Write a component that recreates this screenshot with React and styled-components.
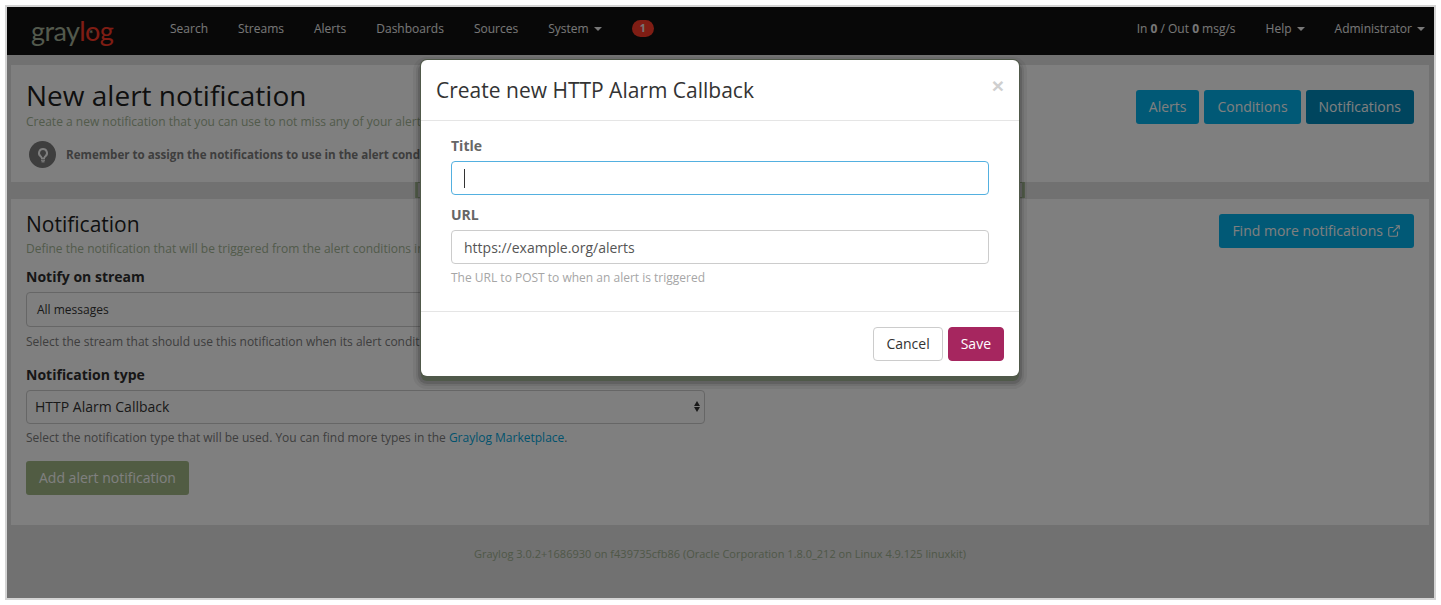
import React from "react";
import styled, { createGlobalStyle } from "styled-components";

const Global = createGlobalStyle`
  html, body { margin: 0; padding: 0; background: #fff; }
  body { font-family: "Open Sans", "Liberation Sans", sans-serif; }
  * { box-sizing: border-box; }
`;
const Frame = styled.div`
  width: 1441px; height: 605px; padding: 5px; background: #fff;
`;
const Window = styled.div`
  position: relative; width: 1431px; height: 595px; border: 2px solid #d4d4d4;
  background: #e2e2e2; overflow: hidden; display: flex; flex-direction: column;
`;
const Nav = styled.nav`
  height: 48px; flex: none; background: #101010; display: flex; align-items: center;
  padding: 0 9px 6px 24px; font-size: 12px; color: #eee;
`;
const Logo = styled.div`
  position: relative; width: 139px; font-family: "Lato", sans-serif; font-size: 27px; line-height: 1;
  color: #a6b29a; letter-spacing: -0.6px; margin-top: 5px;
`;
const LogoRed = styled.span`color: #ff3b28;`;
const LogoStar = styled.span`
  position: absolute; left: 58px; top: 10px; font-size: 10px; line-height: 12px; color: #a6b29a; font-weight: 700;
`;
const NavLinks = styled.div`display: flex; gap: 30px; align-items: center;`;
const NavSpacer = styled.div`flex: 1;`;
const Caret = styled.span`
  display: inline-block; width: 0; height: 0; margin-left: 5px; vertical-align: middle;
  border-top: 4px solid currentColor; border-left: 4px solid transparent; border-right: 4px solid transparent;
`;
const Badge = styled.span`
  display: inline-block; background: #ff3b28; color: #eee; font-weight: 700; font-size: 10.5px;
  border-radius: 10px; padding: 1px 8px; line-height: 15px;
`;
const Main = styled.main`
  flex: 1; padding: 10px 5px 0 4px; display: flex; flex-direction: column;
`;
const Panel = styled.section`
  background: #fff; padding: 15px; display: flex; justify-content: space-between;
  height: ${(p) => p.$h}px; flex: none;
`;
const PanelGap = styled.div`
  height: 17px; flex: none; display: flex; justify-content: center; padding: 0 0 1px;
`;
const GapBox = styled.div`width: 610px; border: 1px solid #a8bc98; border-left-width: 3px; border-right-width: 3px;`;
const H1 = styled.h1`margin: -1px 0 0; font-size: 28px; font-weight: 400; line-height: 32px; color: #1f1f1f;`;
const H2 = styled.h2`margin: -2px 0 0; font-size: 21px; font-weight: 400; line-height: 25px; color: #1f1f1f;`;
const Sub = styled.p`margin: ${(p) => p.$mt || 0}px 0 0; font-size: 12px; line-height: 17px; color: #a4b696; white-space: nowrap;`;
const Hint = styled.div`
  display: flex; align-items: center; gap: 10px; margin-top: 11px; padding-left: 3px; font-weight: 700;
  font-size: 11.6px; color: #7c7c7c; white-space: nowrap;
`;
const Bulb = styled.span`
  width: 27px; height: 27px; border-radius: 50%; background: #7c7c7c; color: #fff;
  display: flex; align-items: center; justify-content: center;
`;
const Buttons = styled.div`display: flex; gap: 5px; margin-top: ${(p) => p.$mt ?? 10}px; align-items: flex-start;`;
const Btn = styled.button`
  font: 400 14px/20px "Open Sans", sans-serif; padding: 6px 13px; height: 34px; border-radius: 3px;
  border: 0; color: #fff; background: ${(p) => p.$bg}; white-space: nowrap; display: inline-flex; align-items: center;
  margin-top: ${(p) => p.$mt || 0}px;
`;
const Label = styled.div`
  font-weight: 700; font-size: 14px; line-height: 18px; color: #2e2e2e; margin-top: ${(p) => p.$mt || 0}px;
`;
const Field = styled.div`
  height: ${(p) => p.$h || 34}px; border: 1px solid #ccc; border-radius: 4px; background: #fff; width: 679px;
  display: flex; align-items: center; justify-content: space-between; margin-top: 6px;
  padding: 0 ${(p) => p.$px || 8}px 1px; font-size: ${(p) => p.$fs || 14}px; color: #333;
`;
const Help = styled.p`margin: ${(p) => p.$mt}px 0 0; font-size: 12px; line-height: 17px; color: #7c7c7c; white-space: nowrap;`;
const Link = styled.span`color: #02a6dc;`;
const Updown = styled.span`display: inline-flex; flex-direction: column; gap: 1px; margin-right: -4px;`;
const Up = styled.i`
  width: 0; height: 0; border-left: 3.5px solid transparent; border-right: 3.5px solid transparent;
  ${(p) => (p.$down ? "border-top: 5px solid #333;" : "border-bottom: 5px solid #333;")}
`;
const Footer = styled.footer`
  flex: 1; text-align: center; font-size: 11px; color: #9fb090; padding-top: 22px; line-height: 14px;
`;
const Overlay = styled.div`
  position: absolute; inset: 0; background: rgba(0, 0, 0, 0.5); display: flex; justify-content: center; align-items: flex-start;
  padding-top: 53px; padding-right: 1px;
`;
const Modal = styled.div`
  width: 598px; height: 316px; background: #fff; border-radius: 6px; display: flex; flex-direction: column;
  box-shadow: 0 0 0 1px #50594a, 0 5px 0 0 #50594a,
    0 5px 0 3px rgba(0, 0, 0, 0.12), 0 5px 0 5px rgba(0, 0, 0, 0.07), 0 5px 0 8px rgba(0, 0, 0, 0.05);
`;
const ModalHead = styled.div`
  height: 61px; border-bottom: 1px solid #e5e5e5; padding: 0 15px; display: flex; justify-content: space-between; flex: none;
`;
const ModalTitle = styled.h3`margin: 15px 0 0; font-size: 21px; line-height: 30px; font-weight: 400; color: #333;`;
const Close = styled.span`margin-top: 12px; font-size: 21px; font-weight: 700; line-height: 28px; color: #cfcfcf; font-family: "Liberation Sans", sans-serif;`;
const ModalBody = styled.div`flex: 1; padding: 16px 30px 0;`;
const MLabel = styled.div`font-weight: 700; font-size: 14px; line-height: 18px; color: #666; margin-top: ${(p) => p.$mt || 0}px;`;
const MInput = styled.div`
  height: 34px; border: 1px solid ${(p) => (p.$focus ? "#53b0e0" : "#ccc")}; border-radius: 4px; margin-top: 6px;
  display: flex; align-items: center; padding: 0 12px; font-size: 14px; color: #555;
`;
const CaretBar = styled.span`width: 1px; height: 19px; background: #333;`;
const MHelp = styled.p`margin: 6px 0 0; font-size: 12px; line-height: 16px; color: #a6a6a6;`;
const ModalFoot = styled.div`
  height: 65px; flex: none; border-top: 1px solid #e5e5e5; padding: 15px; display: flex; justify-content: flex-end; gap: 5px;
`;
const FootBtn = styled.button`
  font: 400 14px/20px "Open Sans", sans-serif; height: 34px; padding: 0 12px; border-radius: 4px;
  border: 1px solid ${(p) => (p.$primary ? "#a6265f" : "#ccc")}; background: ${(p) => (p.$primary ? "#a6265f" : "#fff")};
  color: ${(p) => (p.$primary ? "#fff" : "#333")};
`;
const ExtSvg = styled.svg`margin-left: 4px;`;

const Ext = () => (
  <ExtSvg width="14" height="14" viewBox="0 0 24 24" fill="none" stroke="currentColor" strokeWidth="2">
    <path d="M18 13v6a2 2 0 0 1-2 2H5a2 2 0 0 1-2-2V8a2 2 0 0 1 2-2h6" />
    <path d="M15 3h6v6" />
    <path d="M10 14 21 3" />
  </ExtSvg>
);
const BulbIcon = () => (
  <svg width="14" height="16" viewBox="0 0 14 16" fill="currentColor">
    <path d="M7 1a5 5 0 0 0-3 9c.6.5 1 1 1 2h4c0-1 .4-1.500 1-2a5 5 0 0 0-3-9Zm0 2a3 3 0 0 1 1.800 5.400C8.200 8.900 7.800 9.500 7.600 10.500H6.400C6.200 9.500 5.800 8.900 5.200 8.400A3 3 0 0 1 7 3Z" />
    <rect x="5" y="12.600" width="4" height="1.200" />
    <rect x="5.500" y="14.200" width="3" height="1.200" />
  </svg>
);

export default function App() {
  return (
    <Frame>
      <Global />
      <Window>
        <Nav>
          <Logo>gray<LogoRed>log</LogoRed><LogoStar>*</LogoStar></Logo>
          <NavLinks>
            <span>Search</span><span>Streams</span><span>Alerts</span><span>Dashboards</span><span>Sources</span>
            <span>System<Caret /></span><Badge>1</Badge>
          </NavLinks>
          <NavSpacer />
          <NavLinks>
            <span>In <b>0</b> / Out <b>0</b> msg/s</span><span>Help<Caret /></span><span>Administrator<Caret /></span>
          </NavLinks>
        </Nav>
        <Main>
          <Panel $h={117}>
            <div>
              <H1>New alert notification</H1>
              <Sub $mt={2}>Create a new notification that you can use to not miss any of your alerts.</Sub>
              <Hint><Bulb><BulbIcon /></Bulb>Remember to assign the notifications to use in the alert conditions page.</Hint>
            </div>
            <Buttons>
              <Btn $bg="#02b2ec">Alerts</Btn>
              <Btn $bg="#02b2ec">Conditions</Btn>
              <Btn $bg="#018bbd">Notifications</Btn>
            </Buttons>
          </Panel>
          <PanelGap><GapBox /></PanelGap>
          <Panel $h={326}>
            <div>
              <H2>Notification</H2>
              <Sub $mt={3}>Define the notification that will be triggered from the alert conditions in this stream.</Sub>
              <Label $mt={11}>Notify on stream</Label>
              <Field $px={10} $fs={12} $h={35}>All messages</Field>
              <Help $mt={6}>Select the stream that should use this notification when its alert conditions are met.</Help>
              <Label $mt={16}>Notification type</Label>
              <Field>HTTP Alarm Callback<Updown><Up /><Up $down /></Updown></Field>
              <Help $mt={5}>Select the notification type that will be used. You can find more types in the <Link>Graylog Marketplace</Link>.</Help>
              <Btn $bg="#a2b986" $mt={15}>Add alert notification</Btn>
            </div>
            <Buttons $mt={0}>
              <Btn $bg="#02b2ec">Find more notifications<Ext /></Btn>
            </Buttons>
          </Panel>
          <Footer>Graylog 3.0.2+1686930 on f439735cfb86 (Oracle Corporation 1.8.0_212 on Linux 4.9.125 linuxkit)</Footer>
        </Main>
        <Overlay>
          <Modal>
            <ModalHead>
              <ModalTitle>Create new HTTP Alarm Callback</ModalTitle>
              <Close>×</Close>
            </ModalHead>
            <ModalBody>
              <MLabel>Title</MLabel>
              <MInput $focus><CaretBar /></MInput>
              <MLabel $mt={11}>URL</MLabel>
              <MInput>https://example.org/alerts</MInput>
              <MHelp>The URL to POST to when an alert is triggered</MHelp>
            </ModalBody>
            <ModalFoot>
              <FootBtn>Cancel</FootBtn>
              <FootBtn $primary>Save</FootBtn>
            </ModalFoot>
          </Modal>
        </Overlay>
      </Window>
    </Frame>
  );
}
